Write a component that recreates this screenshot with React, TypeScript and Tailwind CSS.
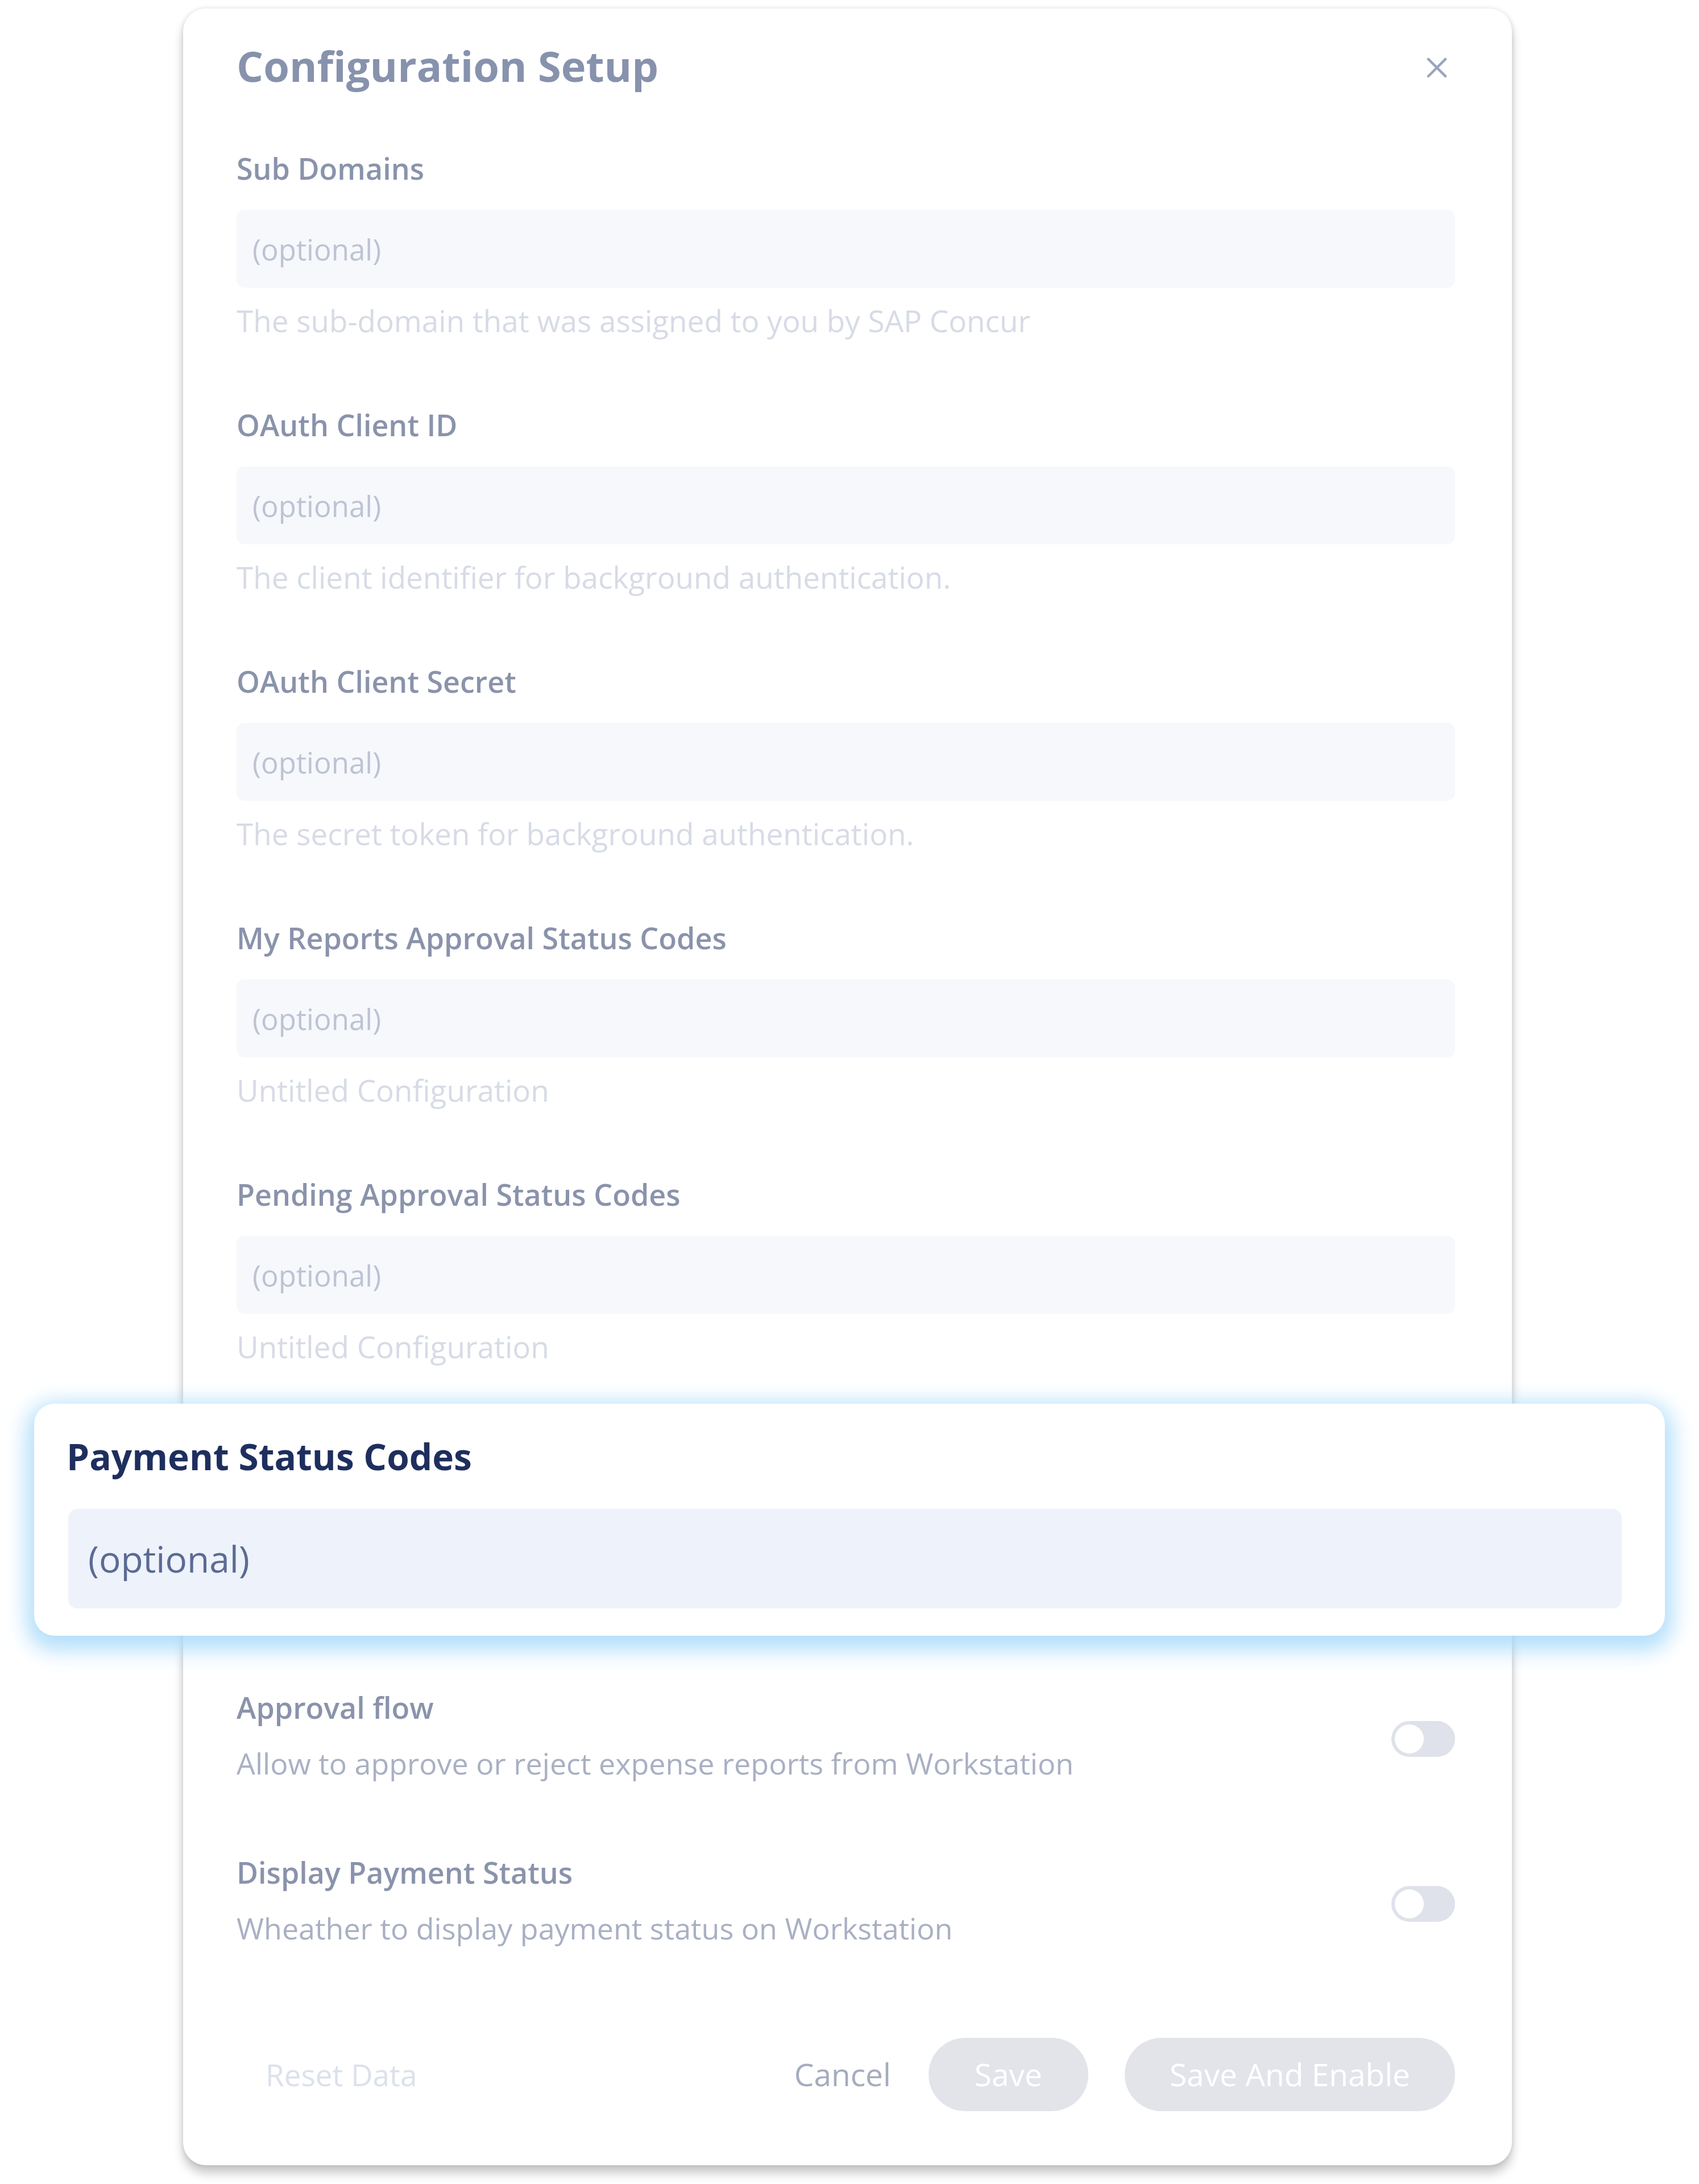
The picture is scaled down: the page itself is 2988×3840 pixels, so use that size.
const fields = [
  { label: "Sub Domains", help: "The sub-domain that was assigned to you by SAP Concur" },
  { label: "OAuth Client ID", help: "The client identifier for background authentication." },
  { label: "OAuth Client Secret", help: "The secret token for background authentication." },
  { label: "My Reports Approval Status Codes", help: "Untitled Configuration" },
  { label: "Pending Approval Status Codes", help: "Untitled Configuration" },
];

const toggles = [
  { label: "Approval flow", desc: "Allow to approve or reject expense reports from Workstation" },
  { label: "Display Payment Status", desc: "Wheather to display payment status on Workstation" },
];

function Field({ label, help, hidden }: { label: string; help: string; hidden?: boolean }) {
  return (
    <div className={hidden ? "invisible flex flex-col" : "flex flex-col"}>
      <span className="text-[52px] leading-[60px] font-semibold text-[#8a93ab]">{label}</span>
      <input
        readOnly
        placeholder="(optional)"
        className="mt-[43px] h-[137px] w-full rounded-[14px] bg-[#f7f8fc] pl-[28px] text-[51px] outline-none placeholder:text-[#bcc3d3]"
      />
      <span className="mt-[28px] text-[53px] leading-[60px] text-[#d6dbe6]">{help}</span>
    </div>
  );
}

function Toggle() {
  return (
    <div className="mt-[12px] flex h-[63px] w-[112px] shrink-0 items-center rounded-full bg-[#dfe2ea] pl-[6px]">
      <div className="size-[51px] rounded-full bg-white" />
    </div>
  );
}

export default function App() {
  return (
    <div className="relative h-[3840px] w-[2988px] overflow-hidden bg-white pt-[15px] pl-[322px] [font-family:'Open_Sans',sans-serif]">
      <div className="flex h-[3792px] w-[2337px] flex-col rounded-[40px] bg-white pt-[61px] pr-[100px] pl-[94px] shadow-[0_14px_18px_rgba(0,0,0,0.22),0_0_8px_rgba(0,0,0,0.12)]">
        <div className="flex h-[80px] items-center justify-between">
          <span className="text-[74px] leading-[80px] font-bold text-[#8792ad]">Configuration Setup</span>
          <svg width="36" height="36" viewBox="0 0 36 36" className="mt-[6px] mr-[14px]">
            <path d="M3 3L33 33M33 3L3 33" stroke="#9aa4be" strokeWidth="4.5" strokeLinecap="round" />
          </svg>
        </div>

        <div className="mt-[110px] flex flex-col gap-[123px]">
          {fields.map((f) => (
            <Field key={f.label} label={f.label} help={f.help} />
          ))}
          {/* sits under the highlighted copy below */}
          <Field label="Payment Status Codes" help="Untitled Configuration" hidden />

          <div className="flex flex-col gap-[132px]">
            {toggles.map((t) => (
              <div key={t.label} className="flex items-center justify-between">
                <div className="flex flex-col">
                  <span className="text-[52px] leading-[60px] font-semibold text-[#8a93ab]">{t.label}</span>
                  <span className="mt-[38px] text-[52px] leading-[60px] text-[#a9b0c3]">{t.desc}</span>
                </div>
                <Toggle />
              </div>
            ))}
          </div>
        </div>

        <div className="mt-[163px] flex h-[129px] items-center">
          <button className="ml-[51px] text-[53px] text-[#dce1eb]">Reset Data</button>
          <button className="ml-auto text-[55px] text-[#a5acbe]">Cancel</button>
          <button className="ml-[66px] h-[129px] rounded-full bg-[#e2e4ea] px-[81px] text-[55px] text-white">
            Save
          </button>
          <button className="ml-[64px] h-[129px] rounded-full bg-[#e2e4ea] px-[79px] text-[55px] text-white">
            Save And Enable
          </button>
        </div>
      </div>

      {/* highlighted field, pops out over the modal */}
      <div className="absolute top-[2468px] left-[60px] flex h-[408px] w-[2868px] flex-col rounded-[36px] bg-white pt-[53px] pr-[79px] pl-[57px] shadow-[0_12px_36px_14px_rgba(160,215,250,0.8)]">
        <span className="text-[64px] leading-[80px] font-bold text-[#1e2f5e]">Payment Status Codes</span>
        <input
          readOnly
          placeholder="(optional)"
          className="mt-[52px] ml-[3px] h-[175px] w-full rounded-[16px] bg-[#eef2fa] pl-[35px] text-[64px] outline-none placeholder:text-[#5b6b94]"
        />
      </div>
    </div>
  );
}
